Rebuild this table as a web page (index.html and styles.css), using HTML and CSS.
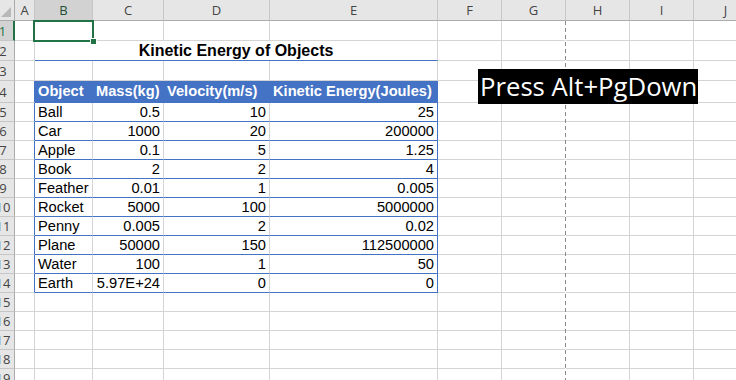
FILE: index.html
```html
<!DOCTYPE html>
<html lang="en">
<head>
  <meta charset="UTF-8" />
  <title>Kinetic Energy of Objects</title>
  <link rel="stylesheet" href="styles.css">
</head>
<body>

<div class="sheet">
  <div class="grid">

    <div class="row head">
      <div class="rh corner"></div>
      <div class="ch">A</div><div class="ch sel">B</div><div class="ch">C</div><div class="ch">D</div><div class="ch">E</div>
      <div class="ch">F</div><div class="ch">G</div><div class="ch">H</div><div class="ch">I</div><div class="ch">J</div>
    </div>

    <div class="row r20">
      <div class="rh sel">1</div>
      <div class="cell"></div><div class="cell"></div><div class="cell"></div><div class="cell"></div><div class="cell"></div>
      <div class="cell"></div><div class="cell"></div><div class="cell"></div><div class="cell"></div><div class="cell"></div>
    </div>

    <div class="row r20">
      <div class="rh">2</div>
      <div class="cell"></div>
      <div class="cell title">Kinetic Energy of Objects</div>
      <div class="cell"></div><div class="cell"></div><div class="cell"></div><div class="cell"></div><div class="cell"></div>
    </div>

    <div class="row r20">
      <div class="rh">3</div>
      <div class="cell"></div><div class="cell"></div><div class="cell"></div><div class="cell"></div><div class="cell"></div>
      <div class="cell"></div><div class="cell"></div><div class="cell"></div><div class="cell"></div><div class="cell"></div>
    </div>

    <div class="row r22">
      <div class="rh">4</div>
      <div class="cell edge"></div>
      <div class="cell th">Object</div><div class="cell th">Mass(kg)</div><div class="cell th">Velocity(m/s)</div><div class="cell th last">Kinetic Energy(Joules)</div>
      <div class="cell"></div><div class="cell"></div><div class="cell"></div><div class="cell"></div><div class="cell"></div>
    </div>

    <div class="row">
      <div class="rh">5</div><div class="cell edge"></div>
      <div class="cell t">Ball</div><div class="cell t num">0.5</div><div class="cell t num">10</div><div class="cell t num last">25</div>
      <div class="cell"></div><div class="cell"></div><div class="cell"></div><div class="cell"></div><div class="cell"></div>
    </div>
    <div class="row">
      <div class="rh">6</div><div class="cell edge"></div>
      <div class="cell t">Car</div><div class="cell t num">1000</div><div class="cell t num">20</div><div class="cell t num last">200000</div>
      <div class="cell"></div><div class="cell"></div><div class="cell"></div><div class="cell"></div><div class="cell"></div>
    </div>
    <div class="row">
      <div class="rh">7</div><div class="cell edge"></div>
      <div class="cell t">Apple</div><div class="cell t num">0.1</div><div class="cell t num">5</div><div class="cell t num last">1.25</div>
      <div class="cell"></div><div class="cell"></div><div class="cell"></div><div class="cell"></div><div class="cell"></div>
    </div>
    <div class="row">
      <div class="rh">8</div><div class="cell edge"></div>
      <div class="cell t">Book</div><div class="cell t num">2</div><div class="cell t num">2</div><div class="cell t num last">4</div>
      <div class="cell"></div><div class="cell"></div><div class="cell"></div><div class="cell"></div><div class="cell"></div>
    </div>
    <div class="row">
      <div class="rh">9</div><div class="cell edge"></div>
      <div class="cell t">Feather</div><div class="cell t num">0.01</div><div class="cell t num">1</div><div class="cell t num last">0.005</div>
      <div class="cell"></div><div class="cell"></div><div class="cell"></div><div class="cell"></div><div class="cell"></div>
    </div>
    <div class="row">
      <div class="rh">10</div><div class="cell edge"></div>
      <div class="cell t">Rocket</div><div class="cell t num">5000</div><div class="cell t num">100</div><div class="cell t num last">5000000</div>
      <div class="cell"></div><div class="cell"></div><div class="cell"></div><div class="cell"></div><div class="cell"></div>
    </div>
    <div class="row">
      <div class="rh">11</div><div class="cell edge"></div>
      <div class="cell t">Penny</div><div class="cell t num">0.005</div><div class="cell t num">2</div><div class="cell t num last">0.02</div>
      <div class="cell"></div><div class="cell"></div><div class="cell"></div><div class="cell"></div><div class="cell"></div>
    </div>
    <div class="row">
      <div class="rh">12</div><div class="cell edge"></div>
      <div class="cell t">Plane</div><div class="cell t num">50000</div><div class="cell t num">150</div><div class="cell t num last">112500000</div>
      <div class="cell"></div><div class="cell"></div><div class="cell"></div><div class="cell"></div><div class="cell"></div>
    </div>
    <div class="row">
      <div class="rh">13</div><div class="cell edge"></div>
      <div class="cell t">Water</div><div class="cell t num">100</div><div class="cell t num">1</div><div class="cell t num last">50</div>
      <div class="cell"></div><div class="cell"></div><div class="cell"></div><div class="cell"></div><div class="cell"></div>
    </div>
    <div class="row">
      <div class="rh">14</div><div class="cell edge"></div>
      <div class="cell t">Earth</div><div class="cell t num">5.97E+24</div><div class="cell t num">0</div><div class="cell t num last">0</div>
      <div class="cell"></div><div class="cell"></div><div class="cell"></div><div class="cell"></div><div class="cell"></div>
    </div>

    <div class="row">
      <div class="rh">15</div>
      <div class="cell"></div><div class="cell"></div><div class="cell"></div><div class="cell"></div><div class="cell"></div>
      <div class="cell"></div><div class="cell"></div><div class="cell"></div><div class="cell"></div><div class="cell"></div>
    </div>
    <div class="row">
      <div class="rh">16</div>
      <div class="cell"></div><div class="cell"></div><div class="cell"></div><div class="cell"></div><div class="cell"></div>
      <div class="cell"></div><div class="cell"></div><div class="cell"></div><div class="cell"></div><div class="cell"></div>
    </div>
    <div class="row">
      <div class="rh">17</div>
      <div class="cell"></div><div class="cell"></div><div class="cell"></div><div class="cell"></div><div class="cell"></div>
      <div class="cell"></div><div class="cell"></div><div class="cell"></div><div class="cell"></div><div class="cell"></div>
    </div>
    <div class="row">
      <div class="rh">18</div>
      <div class="cell"></div><div class="cell"></div><div class="cell"></div><div class="cell"></div><div class="cell"></div>
      <div class="cell"></div><div class="cell"></div><div class="cell"></div><div class="cell"></div><div class="cell"></div>
    </div>
    <div class="row">
      <div class="rh">19</div>
      <div class="cell"></div><div class="cell"></div><div class="cell"></div><div class="cell"></div><div class="cell"></div>
      <div class="cell"></div><div class="cell"></div><div class="cell"></div><div class="cell"></div><div class="cell"></div>
    </div>

  </div>

  <div class="active-cell"></div>
  <div class="page-break"></div>
  <div class="tip">Press Alt+PgDown</div>
</div>

</body>
</html>
```

FILE: styles.css
```css
body {
  margin: 0;
  background: #fff;
  overflow: hidden;
}
.sheet {
  position: relative;
  width: 736px;
  height: 380px;
  overflow: hidden;
}
.grid {
  margin-left: -12px;
  width: 770px;
}
.row {
  display: grid;
  grid-template-columns: 27px 20px 58px 71px 106px 168px 64px 64px 64px 64px 64px;
  height: 19px;
}
.row.head {
  height: 21px;
}
.row.r20 {
  height: 20px;
}
.row.r22 {
  height: 22px;
}
.rh, .ch, .cell {
  box-sizing: border-box;
  overflow: hidden;
  white-space: nowrap;
}
.ch {
  display: flex;
  align-items: center;
  justify-content: center;
  background: #e6e6e6;
  border-right: 1px solid #c6c6c6;
  border-bottom: 1px solid #ababab;
  font-family: "Open Sans", sans-serif;
  font-size: 13px;
  color: #444;
}
.ch.sel {
  background: #d2d2d2;
  color: #1f4e35;
}
.rh {
  display: flex;
  align-items: center;
  justify-content: center;
  padding-left: 4px;
  background: #e6e6e6;
  border-right: 1px solid #ababab;
  border-bottom: 1px solid #c6c6c6;
  font-family: "Open Sans", sans-serif;
  font-size: 13px;
  color: #444;
}
.rh.sel {
  background: #d2d2d2;
  color: #217346;
  border-right: 2px solid #217346;
}
.rh.corner {
  position: relative;
  border-bottom-color: #ababab;
}
.rh.corner::after {
  content: "";
  position: absolute;
  right: 3px;
  bottom: 3px;
  border-style: solid;
  border-width: 0 0 10px 10px;
  border-color: transparent transparent #b8b8b8 transparent;
}
.cell {
  display: flex;
  align-items: flex-end;
  padding: 0 3px;
  border-right: 1px solid #d4d4d4;
  border-bottom: 1px solid #d4d4d4;
  font-family: "Liberation Sans", Arial, sans-serif;
  font-size: 14.67px;
  line-height: 17px;
  color: #000;
}
.cell.title {
  grid-column: 3 / 7;
  align-items: center;
  justify-content: center;
  font-size: 16px;
  font-weight: bold;
  border-bottom-color: #4472c4;
}
.cell.edge {
  border-right-color: #4472c4;
}
.cell.th {
  align-items: center;
  background: #4472c4;
  color: #fff;
  font-weight: bold;
  border-right-color: #4472c4;
  border-bottom-color: #4472c4;
}
.cell.t {
  border-bottom-color: #4472c4;
}
.cell.num {
  justify-content: flex-end;
}
.cell.last {
  border-right-color: #4472c4;
}
.active-cell {
  position: absolute;
  left: 33px;
  top: 20px;
  width: 61px;
  height: 22px;
  box-sizing: border-box;
  border: 2px solid #217346;
}
.active-cell::after {
  content: "";
  position: absolute;
  right: -5px;
  bottom: -5px;
  width: 5px;
  height: 5px;
  background: #217346;
  border: 1px solid #fff;
}
.page-break {
  position: absolute;
  left: 565px;
  top: 21px;
  bottom: 0;
  width: 1px;
  background: repeating-linear-gradient(to bottom, #8a8a8a 0 4px, #fff 4px 7px);
}
.tip {
  position: absolute;
  left: 478px;
  top: 69px;
  width: 220px;
  height: 35px;
  box-sizing: border-box;
  padding-left: 2px;
  background: #000;
  color: #fff;
  font-family: "Open Sans", sans-serif;
  font-size: 25.7px;
  line-height: 35px;
  white-space: nowrap;
  overflow: hidden;
}
```
